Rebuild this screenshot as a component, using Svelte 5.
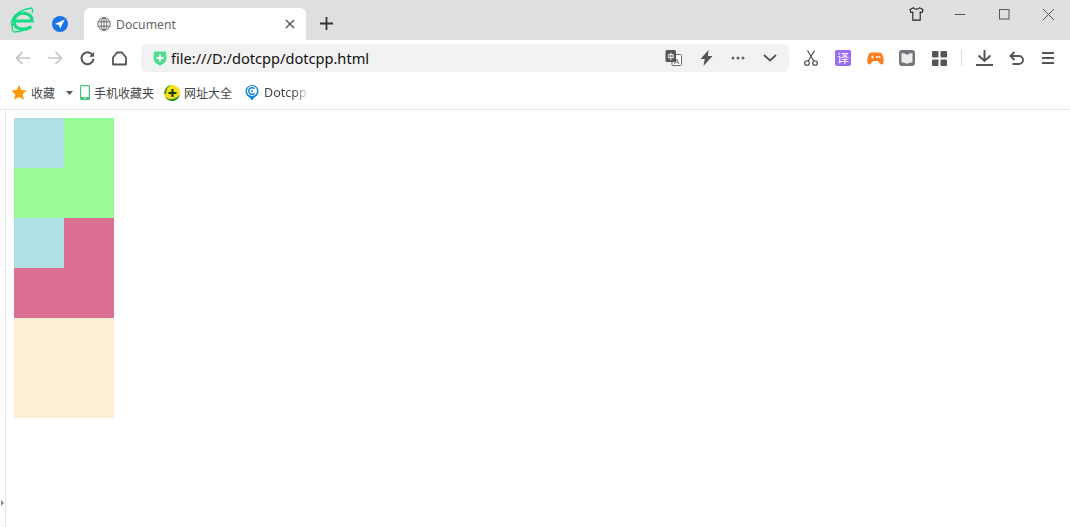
<script>
  const blocks = [
    { color: 'green', inner: true },
    { color: 'pink', inner: true },
    { color: 'cream', inner: false }
  ];
</script>

<div class="browser">
  <header class="titlebar">
    <div class="brand">
      <svg width="24" height="26" viewBox="0 0 24 26" fill="none">
        <path d="M4 14h18c.2-4.800-3.600-7.800-8.500-7.800-5.500 0-9.500 3.300-9.500 8.300 0 4.800 3.800 7.700 9 7.700 3.500 0 6.300-.9 8.300-2.700" stroke="#17dc86" stroke-width="3.200"/>
        <path d="M2 18.500C-.5 11 8 3 21.500 1c1.500 1.500 1.500 3 .5 5" stroke="#17dc86" stroke-width="1.400"/>
        <path d="M2.500 17c-1 3.500 0 7 1.500 8 3.500 0 7-.7 10-2" stroke="#17dc86" stroke-width="1.400"/>
      </svg>
    </div>
    <div class="send">
      <svg width="16" height="16" viewBox="0 0 16 16">
        <circle cx="8" cy="8" r="8" fill="#1b73e8"/>
        <path d="M12.800 3.500 2.800 8l4.300.9.900 3.900z" fill="#fff"/>
      </svg>
    </div>
    <div class="tab">
      <svg class="globe" width="14" height="14" viewBox="0 0 14 14" fill="none" stroke="#666" stroke-width="1">
        <circle cx="7" cy="7" r="6.300"/>
        <ellipse cx="7" cy="7" rx="2.900" ry="6.300"/>
        <path d="M7 .7v12.600M1 4.800h12M1 9.200h12"/>
      </svg>
      <span class="tab-title">Document</span>
      <svg class="tab-close" width="10" height="10" viewBox="0 0 10 10" stroke="#555" stroke-width="1.400">
        <path d="M1 1l8 8M9 1l-8 8"/>
      </svg>
    </div>
    <div class="newtab">
      <svg width="13" height="13" viewBox="0 0 13 13" stroke="#333" stroke-width="1.800">
        <path d="M6.500 0v13M0 6.500h13"/>
      </svg>
    </div>
    <div class="winctl">
      <button class="ctl" aria-label="skin">
        <svg width="15" height="14" viewBox="0 0 15 14" fill="none" stroke="#222" stroke-width="1.100">
          <path d="M4.500.8 1 2.500l.8 3 2-.3v7.900h7.400V5.200l2 .3.800-3L10.500.8C10 2.600 5 2.600 4.500.8z"/>
        </svg>
      </button>
      <button class="ctl" aria-label="minimize">
        <svg width="11" height="11" viewBox="0 0 11 11" stroke="#555"><path d="M0 5.500h10"/></svg>
      </button>
      <button class="ctl" aria-label="maximize">
        <svg width="11" height="11" viewBox="0 0 11 11" fill="none" stroke="#555"><rect x=".5" y=".5" width="9.500" height="9.500"/></svg>
      </button>
      <button class="ctl" aria-label="close">
        <svg width="11" height="11" viewBox="0 0 11 11" stroke="#555"><path d="M0 0l11 11M11 0 0 11"/></svg>
      </button>
    </div>
  </header>

  <nav class="toolbar">
    <div class="navgroup">
      <button class="btn" aria-label="back">
        <svg width="16" height="14" viewBox="0 0 16 14" fill="none" stroke="#c4c4c4" stroke-width="1.700"><path d="M15 7H1.500M7.500 1l-6 6 6 6"/></svg>
      </button>
      <button class="btn" aria-label="forward">
        <svg width="16" height="14" viewBox="0 0 16 14" fill="none" stroke="#c4c4c4" stroke-width="1.700"><path d="M1 7h13.500M8.500 1l6 6-6 6"/></svg>
      </button>
      <button class="btn" aria-label="reload">
        <svg width="15" height="15" viewBox="0 0 15 15" fill="none" stroke="#555" stroke-width="2"><path d="M12.300 3.500A6 6 0 1 0 13.500 8"/><path d="M14 1v4.800H9.200z" fill="#555" stroke="none"/></svg>
      </button>
      <button class="btn" aria-label="home">
        <svg width="15" height="15" viewBox="0 0 15 15" fill="none" stroke="#555" stroke-width="1.800"><path d="M1 6.500 5 1.500h5l4 5v7H1z" stroke-linejoin="round"/></svg>
      </button>
    </div>
    <div class="address">
      <svg class="shield" width="14" height="16" viewBox="0 0 14 16">
        <path d="M1 1.500h12l.5 7c0 3-3 5.500-6.500 7C3.500 14 .5 11.500.5 8.500z" fill="#4fdc8c"/>
        <path d="M7 4.500v7M3.500 8h7" stroke="#fff" stroke-width="1.800"/>
      </svg>
      <span class="url">file:///D:/dotcpp/dotcpp.html</span>
      <div class="addr-icons">
        <svg width="17" height="16" viewBox="0 0 17 16">
          <rect x="7" y="4.500" width="9.500" height="11" rx="1" fill="#fff" stroke="#555" stroke-width=".9"/>
          <rect x=".5" y="0" width="10.500" height="12" rx="1.500" fill="#555"/>
          <text x="5.700" y="8.800" class="zh">中</text>
          <text x="11.700" y="13.700" class="latin">A</text>
        </svg>
        <svg width="13" height="16" viewBox="0 0 13 16"><path d="M8.500 0 .5 9h4.200L3.500 16l9-10H8z" fill="#555"/></svg>
        <svg width="14" height="4" viewBox="0 0 14 4" fill="#666"><circle cx="2" cy="2" r="1.500"/><circle cx="7" cy="2" r="1.500"/><circle cx="12" cy="2" r="1.500"/></svg>
        <svg width="14" height="8" viewBox="0 0 14 8" fill="none" stroke="#555" stroke-width="1.700"><path d="M1 1l6 5.500L13 1"/></svg>
      </div>
    </div>
    <div class="tools">
      <button class="btn" aria-label="cut">
        <svg width="14" height="16" viewBox="0 0 14 16" fill="none" stroke="#444" stroke-width="1.100"><circle cx="3" cy="13" r="2.300"/><circle cx="11" cy="13" r="2.300"/><path d="M4.200 11 10.500.5M9.800 11 3.500.5"/></svg>
      </button>
      <button class="btn" aria-label="translate">
        <span class="yi">译</span>
      </button>
      <button class="btn" aria-label="game">
        <svg width="17" height="13" viewBox="0 0 17 13">
          <path d="M4.500.5h8c2.500 0 4 3.500 4.200 8 .1 3-1.200 4-2.200 4-1.500 0-2.500-2.700-3.500-3.500h-5c-1 .8-2 3.500-3.500 3.500-1 0-2.300-1-2.200-4C.5 4 2 .5 4.500.5z" fill="#fb7f24"/>
          <path d="M4 5h3M5.500 3.500v3" stroke="#fff"/><circle cx="10" cy="5" r="1" fill="#fff"/><circle cx="12.500" cy="5" r="1" fill="#fff"/>
        </svg>
      </button>
      <button class="btn" aria-label="reader">
        <svg width="16" height="16" viewBox="0 0 16 16">
          <rect width="16" height="16" rx="3" fill="#75757d"/>
          <path d="M2.500 3C4.500 3 7 3.800 8 5c1-1.200 3.500-2 5.500-2v9.500C11 12.500 9 13 8 14c-1-1-3-1.500-5.500-1.500z" fill="#ececec"/>
        </svg>
      </button>
      <button class="btn" aria-label="apps">
        <svg width="15" height="15" viewBox="0 0 15 15" fill="#555"><rect width="6.500" height="6.500" rx="1"/><rect x="8.500" width="6.500" height="6.500" rx="1"/><rect y="8.500" width="6.500" height="6.500" rx="1"/><rect x="8.500" y="8.500" width="6.500" height="6.500" rx="1"/></svg>
      </button>
      <span class="divider"></span>
      <button class="btn" aria-label="download">
        <svg width="17" height="16" viewBox="0 0 17 16" fill="none" stroke="#555" stroke-width="2"><path d="M8.500 0v10M2.500 5.500l6 5.500 6-5.500M0 15h17"/></svg>
      </button>
      <button class="btn" aria-label="undo">
        <svg width="15" height="14" viewBox="0 0 15 14" fill="none" stroke="#555" stroke-width="1.900"><path d="M5.500 1 1.500 5l4 4M1.500 5h8.500a3.800 3.800 0 0 1 0 8H3.500"/></svg>
      </button>
      <button class="btn" aria-label="menu">
        <svg width="12" height="12" viewBox="0 0 12 12" stroke="#555" stroke-width="2"><path d="M0 1h12M0 6h12M0 11h12"/></svg>
      </button>
    </div>
  </nav>

  <div class="bookmarks">
    <div class="bm first">
      <svg width="16" height="15" viewBox="0 0 16 15"><path d="M8 0l2.300 5 5.500.6-4.100 3.700 1.200 5.400L8 12l-4.900 2.700 1.200-5.400L.2 5.600 5.700 5z" fill="#ff9a0d"/></svg>
      <span>收藏</span>
      <svg class="caret" width="7" height="4" viewBox="0 0 7 4"><path d="M0 0h7L3.500 4z" fill="#555"/></svg>
    </div>
    <div class="bm phone">
      <svg width="10" height="15" viewBox="0 0 10 15"><rect x=".6" y=".6" width="8.800" height="13.800" rx="1" fill="#fff" stroke="#45c17a" stroke-width="1.200"/><path d="M1 12h8v2H1z" fill="#45c17a"/><path d="M4 13h2" stroke="#fff"/></svg>
      <span>手机收藏夹</span>
    </div>
    <div class="bm site">
      <svg width="16" height="16" viewBox="0 0 16 16">
        <circle cx="8" cy="8" r="8" fill="#f4e015"/>
        <path d="M.6 11C2.500 14.500 10 16.500 15.500 10 15 13.500 12 16 8 16c-3.500 0-6.200-2.200-7.400-5z" fill="#1f8a2a"/>
        <path d="M.3 9C0 4 4 .2 8 0 4.500 1 2.200 4 2.300 8.500z" fill="#2e9a3a"/>
        <path d="M8.500 4v8M4.500 8h8" stroke="#1d3b12" stroke-width="2.200"/>
      </svg>
      <span>网址大全</span>
    </div>
    <div class="bm dot">
      <svg width="14" height="17" viewBox="0 0 14 17" fill="none">
        <path d="M7 16.500 4.700 13.500A6.500 6.500 0 1 1 9.300 13.500z" fill="#1289d8"/>
        <circle cx="7" cy="7" r="5" fill="#fff"/>
        <path d="M9.500 4.800a3.300 3.300 0 1 0 0 4.400" stroke="#1289d8" stroke-width="1.500"/>
        <circle cx="7" cy="7" r="1" fill="#1289d8"/>
      </svg>
      <span class="fade">Dotcpp</span>
    </div>
  </div>

  <main class="content">
    <aside class="rail"><span class="grip"></span></aside>
    <div class="page">
      {#each blocks as b}
        <div class="block {b.color}">
          {#if b.inner}<div class="inner"></div>{/if}
        </div>
      {/each}
    </div>
  </main>
</div>

<style>
  :global(body) { margin: 0; background: #fff; }
  .browser {
    width: 1070px;
    height: 527px;
    display: flex;
    flex-direction: column;
    overflow: hidden;
    font-family: "Noto Sans CJK SC", "Noto Sans", sans-serif;
    color: #444;
  }
  button { border: 0; padding: 0; background: none; font: inherit; }

  .titlebar {
    height: 40px;
    flex: none;
    background: #dfdfdf;
    display: flex;
    align-items: flex-end;
  }
  .brand { width: 24px; height: 26px; margin: 0 0 7px 10px; }
  .brand svg, .send svg { display: block; }
  .send { width: 16px; height: 16px; margin: 0 0 8px 18px; }
  .tab {
    width: 222px;
    height: 32px;
    margin-left: 16px;
    background: #fff;
    border-radius: 6px 6px 0 0;
    display: flex;
    align-items: center;
    padding: 0 11px 0 13px;
    box-sizing: border-box;
  }
  .tab-title {
    margin-left: 5px;
    flex: 1;
    font-family: "Noto Sans", sans-serif;
    font-size: 12.200px;
    color: #666;
  }
  .newtab { width: 13px; height: 13px; margin: 0 0 10px 14px; }
  .newtab svg { display: block; }
  .winctl {
    margin-left: auto;
    align-self: flex-start;
    display: flex;
  }
  .ctl { width: 44px; height: 28px; display: flex; align-items: center; justify-content: center; }

  .toolbar {
    height: 36px;
    flex: none;
    display: flex;
    align-items: center;
    padding: 0 6px;
  }
  .navgroup, .tools { display: flex; align-items: center; }
  .btn { width: 32px; height: 28px; display: flex; align-items: center; justify-content: center; }
  .navgroup { width: 129px; }
  .navgroup .btn:nth-child(1) { width: 33px; }
  .address {
    margin-left: 6px;
    width: 648px;
    height: 28px;
    background: #f2f2f2;
    border-radius: 6px;
    display: flex;
    align-items: center;
    padding-left: 12px;
    box-sizing: border-box;
  }
  .shield { flex: none; }
  .url {
    margin-left: 4px;
    flex: 1;
    font-family: "Noto Sans", sans-serif;
    font-size: 14.600px;
    color: #111;
  }
  .addr-icons {
    display: flex;
    align-items: center;
    width: 112px;
    margin-right: 12px;
    justify-content: space-between;
  }
  .zh { font-size: 6.500px; fill: #fff; text-anchor: middle; font-weight: 700; }
  .latin { font-size: 8px; fill: #555; text-anchor: middle; font-family: "Liberation Sans", sans-serif; }
  .tools { margin-left: 6px; }
  .yi {
    width: 16px;
    height: 16px;
    border-radius: 2px;
    background: #9a6cf5;
    color: #fff;
    font-size: 12px;
    line-height: 16px;
    text-align: center;
    display: block;
  }
  .divider { width: 1px; height: 16px; background: #d9d9d9; margin: 0 6px; }

  .bookmarks {
    height: 33px;
    flex: none;
    display: flex;
    align-items: center;
    border-bottom: 1px solid #e6e6e6;
    font-size: 12px;
    color: #444;
  }
  .bm { display: flex; align-items: center; }
  .first { margin-left: 11px; gap: 4px; }
  .caret { margin-left: 7px; }
  .phone { margin-left: 7px; gap: 4px; }
  .site { margin-left: 10px; gap: 4px; }
  .dot { margin-left: 13px; gap: 5px; }
  .fade {
    font-family: "Noto Sans", sans-serif;
    font-size: 12.500px;
    background: linear-gradient(90deg, #444 70%, #ddd 100%);
    -webkit-background-clip: text;
    background-clip: text;
    color: transparent;
  }

  .content { flex: 1; display: flex; min-height: 0; }
  .rail {
    width: 5px;
    border-right: 1px solid #e6e6e6;
    position: relative;
    flex: none;
  }
  .grip {
    position: absolute;
    left: 1px;
    bottom: 21px;
    border-left: 3px solid #888;
    border-top: 3px solid transparent;
    border-bottom: 3px solid transparent;
  }
  .page { padding: 8px 0 0 8px; }
  .block { width: 100px; height: 100px; }
  .inner { width: 50px; height: 50px; background: #b0e0e6; }
  .green { background: #98fb98; }
  .pink { background: #db7093; }
  .cream { background: #ffefd5; }
</style>
